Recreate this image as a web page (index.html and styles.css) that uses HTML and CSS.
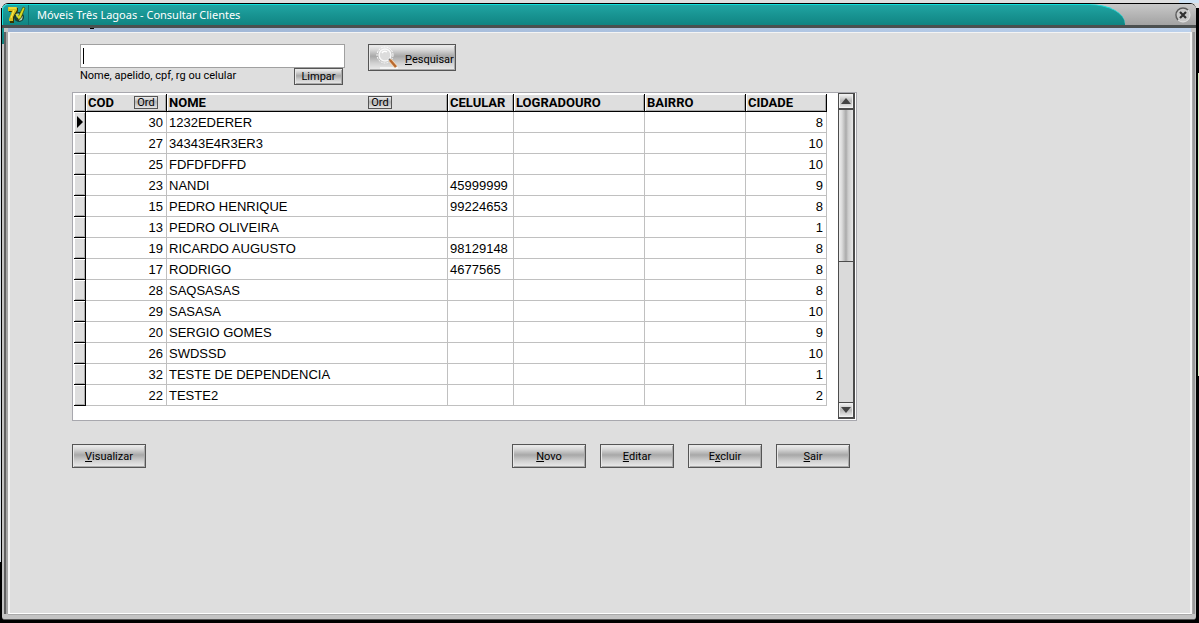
FILE: index.html
```html
<!DOCTYPE html>
<html lang="pt-BR">
<head>
<meta charset="utf-8">
<title>Móveis Três Lagoas - Consultar Clientes</title>
<link rel="stylesheet" href="styles.css">
</head>
<body>
<div class="window">
  <header class="titlebar">
    <div class="caption">
      <svg class="app-icon" width="18" height="18" viewBox="0 0 18 18" aria-hidden="true">
        <path d="M1 2h9v3L6 12v5H2v-4l3-7H1z" fill="#3a3400"/>
        <path d="M0 1h9v3L5 11v4H1v-2l3-8H0z" fill="#d8c020"/>
        <path d="M1 2h7M6 4l-3 8" stroke="#fff04a" fill="none"/>
        <circle cx="11" cy="11" r="5" fill="#173c35"/>
        <path d="M8 9l2-2 2 2-1 2-2 1zM12 12l3-2-1 4-3 1z" fill="#a9cfb2"/>
        <path d="M10 11l5-10 2 1-4 10-3 2z" fill="#d7dd22" stroke="#3d4a10" stroke-width=".7"/>
        <path d="M8 8l3 4" stroke="#d7dd22" stroke-width="1.5"/>
      </svg>
      <h1 class="title">Móveis Três Lagoas - Consultar Clientes</h1>
    </div>
    <button class="close" type="button" aria-label="Fechar">
      <svg width="16" height="16" viewBox="0 0 16 16" aria-hidden="true">
        <circle cx="8" cy="8" r="7" fill="#c9c9c9" stroke="#e4e4e4"/>
        <path d="M3 13A7 7 0 0 1 13 3" fill="none" stroke="#5c5c5c" stroke-width="1.5"/>
        <path d="M5 5l6 6M11 5l-6 6" stroke="#303030" stroke-width="2.2"/>
      </svg>
    </button>
  </header>
  <div class="stripe"></div>
  <main class="client">
    <form class="search">
      <div class="field">
        <div class="box"><span class="caret"></span><input class="query" id="query" type="text"></div>
        <div class="hint-row">
          <label class="hint" for="query">Nome, apelido, cpf, rg ou celular</label>
          <button class="btn clear" type="button">Limpar</button>
        </div>
      </div>
      <button class="btn find" type="button">
        <svg width="26" height="24" viewBox="0 0 26 24" aria-hidden="true">
          <path d="M5 21h18v2H5z" fill="#f5f5f5"/>
          <circle cx="10" cy="9" r="8" fill="none" stroke="#fff" stroke-dasharray="2 1"/>
          <circle cx="10" cy="9" r="6" fill="#dcdcdc" stroke="#f8f8f8" stroke-width="1.5"/>
          <path d="M7 7q2-3 5-1" fill="none" stroke="#fff" stroke-width="1.5"/>
          <path d="M14 13l3 3" stroke="#777" stroke-width="2"/>
          <path d="M15 14l6 7" stroke="#f4d9b8" stroke-width="4"/>
          <path d="M15 14l6 7" stroke="#b9692f" stroke-width="2.5"/>
        </svg>
        <span><u>P</u>esquisar</span>
      </button>
    </form>

    <section class="grid">
      <table class="clients">
        <colgroup><col class="c-mark"><col class="c-cod"><col class="c-nome"><col class="c-cel"><col class="c-log"><col class="c-bairro"><col class="c-cidade"></colgroup>
        <thead>
          <tr>
            <th></th>
            <th><div class="head">COD<button class="ord" type="button">Ord</button></div></th>
            <th><div class="head wide">NOME<button class="ord" type="button">Ord</button></div></th>
            <th>CELULAR</th><th>LOGRADOURO</th><th>BAIRRO</th><th>CIDADE</th>
          </tr>
        </thead>
        <tbody>
          <tr><td class="mark"><svg class="pointer" width="6" height="12" viewBox="0 0 6 12"><path d="M0 0l6 6-6 6z"/></svg></td><td class="num">30</td><td>1232EDERER</td><td></td><td></td><td></td><td class="num">8</td></tr>
          <tr><td class="mark"></td><td class="num">27</td><td>34343E4R3ER3</td><td></td><td></td><td></td><td class="num">10</td></tr>
          <tr><td class="mark"></td><td class="num">25</td><td>FDFDFDFFD</td><td></td><td></td><td></td><td class="num">10</td></tr>
          <tr><td class="mark"></td><td class="num">23</td><td>NANDI</td><td>45999999</td><td></td><td></td><td class="num">9</td></tr>
          <tr><td class="mark"></td><td class="num">15</td><td>PEDRO HENRIQUE</td><td>99224653</td><td></td><td></td><td class="num">8</td></tr>
          <tr><td class="mark"></td><td class="num">13</td><td>PEDRO OLIVEIRA</td><td></td><td></td><td></td><td class="num">1</td></tr>
          <tr><td class="mark"></td><td class="num">19</td><td>RICARDO AUGUSTO</td><td>98129148</td><td></td><td></td><td class="num">8</td></tr>
          <tr><td class="mark"></td><td class="num">17</td><td>RODRIGO</td><td>4677565</td><td></td><td></td><td class="num">8</td></tr>
          <tr><td class="mark"></td><td class="num">28</td><td>SAQSASAS</td><td></td><td></td><td></td><td class="num">8</td></tr>
          <tr><td class="mark"></td><td class="num">29</td><td>SASASA</td><td></td><td></td><td></td><td class="num">10</td></tr>
          <tr><td class="mark"></td><td class="num">20</td><td>SERGIO GOMES</td><td></td><td></td><td></td><td class="num">9</td></tr>
          <tr><td class="mark"></td><td class="num">26</td><td>SWDSSD</td><td></td><td></td><td></td><td class="num">10</td></tr>
          <tr><td class="mark"></td><td class="num">32</td><td>TESTE DE DEPENDENCIA</td><td></td><td></td><td></td><td class="num">1</td></tr>
          <tr><td class="mark"></td><td class="num">22</td><td>TESTE2</td><td></td><td></td><td></td><td class="num">2</td></tr>
        </tbody>
      </table>
      <div class="scrollbar">
        <button class="arrow" type="button" aria-label="Rolar para cima"><svg width="10" height="6" viewBox="0 0 10 6"><path d="M5 0l5 6H0z"/></svg></button>
        <div class="track"><div class="thumb"></div></div>
        <button class="arrow" type="button" aria-label="Rolar para baixo"><svg width="10" height="6" viewBox="0 0 10 6"><path d="M0 0h10L5 6z"/></svg></button>
      </div>
    </section>

    <div class="actions">
      <button class="btn action view" type="button"><u>V</u>isualizar</button>
      <button class="btn action" type="button"><u>N</u>ovo</button>
      <button class="btn action" type="button"><u>E</u>ditar</button>
      <button class="btn action" type="button">E<u>x</u>cluir</button>
      <button class="btn action" type="button"><u>S</u>air</button>
    </div>
  </main>
</div>
</body>
</html>
```
FILE: styles.css
```css
* { box-sizing: border-box; }
body {
  margin: 0;
  padding: 3px 3px 3px 2px;
  min-height: 100vh;
  display: flex;
  background:
    linear-gradient(#cfe3f5, #cfe3f5) right 0 top 0 / 20px 3px no-repeat,
    linear-gradient(#d4ecc0, #d4ecc0) right 0 top 73px / 1px 303px no-repeat,
    linear-gradient(#d4dce4, #d4dce4) left 0 top 8px / 1px 554px no-repeat,
    linear-gradient(#dedede 0 8px, #000 8px);
  font: 11px/14px Roboto, "Liberation Sans", sans-serif;
  color: #000;
}
button, input { font: inherit; color: inherit; }
button { padding: 0; }
.window {
  flex: 1;
  display: flex;
  flex-direction: column;
  border-radius: 6px 6px 3px 3px;
  overflow: hidden;
  border-top: 1px solid #000;
  border-bottom: 1px solid #555;
  background: linear-gradient(#14b4b0, #107c7a) left top / 2px 40px no-repeat #c4c4c4;
}
.titlebar {
  display: flex;
  align-items: center;
  height: 24px;
  padding-right: 5px;
  border-bottom: 3px solid #4b4f4f;
  background: linear-gradient(#c8c8c8, #a2a2a2);
}
.caption {
  flex: 1;
  display: flex;
  align-items: center;
  height: 21px;
  margin-right: 50px;
  padding-left: 5px;
  border-top: 1px solid #10e0dc;
  border-left: 1px solid #10e0dc;
  border-radius: 6px 36px 0 0 / 6px 20px 0 0;
  background: linear-gradient(#20a4a2, #108482);
}
.title {
  margin: 0 0 0 2px;
  padding-left: 8px;
  border-left: 1px solid #0d6f6f;
  font: 11px/20px "Noto Sans", sans-serif;
  color: #fff;
}
.close {
  width: 16px;
  height: 16px;
  border: 0;
  background: none;
}
.close svg { display: block; }
.stripe {
  height: 4px;
  margin: 0 5px 0 6px;
  background: linear-gradient(#000, #000) 82px 0 / 4px 1px no-repeat, linear-gradient(90deg, #9db3d2, #bbd0eb);
}
.client {
  flex: 1;
  margin: 0 4px 5px 6px;
  padding: 11px 62px 16px;
  background: #dedede;
  border: solid #f4f4f4;
  border-width: 1px 2px;
  border-bottom-color: #fff;
  box-shadow: -2px 0 #a4a4a4, -4px 0 #606060, 1px 0 #aaa, 3px 0 #999, 0 1px #aaa;
}
.search {
  display: flex;
  align-items: flex-start;
  gap: 23px;
  height: 48px;
  padding-left: 8px;
}
.field { width: 265px; }
.box {
  display: flex;
  align-items: center;
  height: 24px;
  padding-left: 2px;
  border: 1px solid #a0a0a0;
  background: #fff;
}
.caret { width: 1px; height: 16px; background: #000; }
.query {
  flex: 1;
  min-width: 0;
  height: 20px;
  border: 0;
  outline: 0;
  background: none;
}
.hint-row {
  display: flex;
  justify-content: space-between;
  padding-right: 2px;
}
.hint { padding-top: 1px; }
.btn {
  border: 1px solid #555;
  background: linear-gradient(#f0f0f0, #d6d6d6 20%, #a8a8a8 45%, #d0d0d0 72%, #ececec);
  box-shadow: inset 1px 1px #e8e8e8, inset -1px -1px #aaa;
}
.clear { width: 49px; height: 17px; line-height: 14px; }
.find {
  display: flex;
  align-items: center;
  gap: 4px;
  width: 88px;
  height: 27px;
  padding-left: 6px;
}
.find span { padding-top: 4px; }
.grid {
  display: flex;
  justify-content: space-between;
  width: 785px;
  max-width: 100%;
  height: 329px;
  padding: 1px;
  border: 1px solid #a8a8ae;
  background: #fff;
}
.clients {
  width: 753px;
  align-self: flex-start;
  table-layout: fixed;
  border-collapse: separate;
  border-spacing: 0;
  font: 13px/18px "Liberation Sans", Arial, sans-serif;
}
.c-mark { width: 12px; }
.c-cod { width: 81px; }
.c-nome { width: 281px; }
.c-cel { width: 66px; }
.c-log { width: 131px; }
.c-bairro { width: 101px; }
.c-cidade { width: 81px; }
.clients th {
  height: 18px;
  padding: 0 0 0 2px;
  border-right: 1px solid #000;
  border-bottom: 1px solid #000;
  background: #dedede;
  box-shadow: inset 1px 1px #fff, inset -1px -1px #aaa;
  font: bold 13px/16px Roboto, "Liberation Sans", sans-serif;
  text-align: left;
  white-space: nowrap;
}
.clients td {
  height: 21px;
  padding: 2px 2px 0;
  border-right: 1px solid #c0c0c0;
  border-bottom: 1px solid #c0c0c0;
  white-space: nowrap;
}
.clients .num { padding-right: 3px; text-align: right; }
.clients .mark {
  padding: 0 0 0 3px;
  border-color: #000;
  background: #dedede;
  box-shadow: inset 1px 1px #fff, inset -1px -1px #aaa;
}
.pointer { display: block; }
.head {
  display: flex;
  align-items: center;
  justify-content: space-between;
  padding-right: 8px;
}
.wide { padding-right: 55px; }
.ord {
  width: 24px;
  height: 13px;
  border: 1px solid #555;
  background: linear-gradient(#eee, #b4b4b4 45%, #e4e4e4);
  font: 11px/11px Roboto, "Liberation Sans", sans-serif;
}
.scrollbar {
  display: flex;
  flex-direction: column;
  width: 17px;
  margin-top: -1px;
  border: solid #4c4c4c;
  border-width: 1px 2px 2px 1px;
  background: #dadada;
}
.arrow {
  display: flex;
  align-items: center;
  justify-content: center;
  height: 14px;
  border: 1px solid #f0f0f0;
  background: linear-gradient(#eee, #b8b8b8 50%, #e6e6e6);
}
.arrow path { fill: #444; }
.track {
  flex: 1;
  border: solid #4c4c4c;
  border-width: 2px 0 1px;
}
.thumb {
  height: 52%;
  border-bottom: 1px solid #4c4c4c;
  background: linear-gradient(90deg, #eee, #ddd 20%, #aaa 50%, #ccc 65%, #e8e8e8);
}
.actions {
  display: flex;
  gap: 14px;
  width: 778px;
  max-width: 100%;
  padding-top: 23px;
}
.action { width: 74px; height: 24px; padding-top: 2px; }
.view { margin-right: auto; }
```
